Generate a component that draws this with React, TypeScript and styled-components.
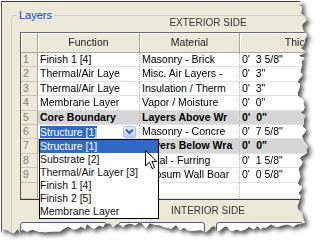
import React from 'react'
import styled, { createGlobalStyle } from 'styled-components'

const GlobalStyle = createGlobalStyle`
  html, body {
    margin: 0;
    padding: 0;
    background: #fff;
  }
  body {
    font-family: "Liberation Sans", Arial, sans-serif;
  }
`

// jagged outline of the torn screenshot, built once
function tornEdge(): string {
    let seed = 23
    const rnd = () => {
        seed = (seed * 16807) % 2147483647
        return seed / 2147483647 - 0.5
    }
    const pts: string[] = ['0px 0px', '298px 0px', '302px 2px']
    let y = 4
    while (y <= 218) {
        const x = 301 + Math.sin(y / 17) * 3 + rnd() * 7
        pts.push(`${x.toFixed(1)}px ${y}px`)
        y += 2 + Math.round((rnd() + 0.5) * 3)
    }
    let x = 304
    while (x >= 0) {
        const drop = x < 40 ? (40 - x) / 7 : 0
        const yy = 226 + Math.sin(x / 27) * 2.5 + drop + rnd() * 6
        pts.push(`${x}px ${yy.toFixed(1)}px`)
        x -= 2 + Math.round((rnd() + 0.5) * 3)
    }
    pts.push('0px 232px')
    return `polygon(${pts.join(',')})`
}
const TORN = tornEdge()

const COLS = '17px 102px 100px 138px 1fr'

const Sheet = styled.div`
    margin: 1px 0 0 1px;
    width: 312px;
    filter: drop-shadow(3px 3px 2px rgba(0, 0, 0, 0.65));
`

const Dialog = styled.div`
    width: 312px;
    height: 238px;
    box-sizing: border-box;
    overflow: hidden;
    background: #ece9d8;
    border-top: 1px solid #3c3c3c;
    border-left: 1px solid #5a5a5a;
    clip-path: ${TORN};
    font-size: 10.5px;
    color: #000;
`

const GroupBox = styled.div`
    position: relative;
    width: 394px;
    box-sizing: border-box;
    margin: 13px 0 0 9px;
    padding: 0 8px;
    border: 1px solid #d0d0bf;
    border-radius: 3px;
`

const Legend = styled.span`
    position: absolute;
    top: -8px;
    left: 5px;
    padding: 0 2px;
    background: #ece9d8;
    color: #0046d5;
    font-size: 11px;
    line-height: 14px;
`

const SideLabel = styled.div<{ $height: number; $pad: number }>`
    height: ${p => p.$height}px;
    box-sizing: border-box;
    padding-top: ${p => p.$pad}px;
    line-height: 14px;
    text-align: center;
    font-size: 10px;
    color: #333;
`

const Grid = styled.div`
    background: #fff;
    border-top: 1px solid #6b6b6b;
    border-left: 1px solid #5a5a5a;
    border-bottom: 1px solid #3a3a3a;
`

const HeaderRow = styled.div`
    display: grid;
    grid-template-columns: ${COLS};
    height: 20px;
    background: #ece9d8;
`

const HeadCell = styled.div`
    border-right: 1px solid #aca899;
    border-bottom: 1px solid #aca899;
    box-shadow: inset 1px 1px 0 #fff;
    text-align: center;
    line-height: 19px;
    color: #222;
    white-space: nowrap;
    overflow: hidden;
`

const Row = styled.div<{ $height?: number }>`
    display: grid;
    grid-template-columns: ${COLS};
    height: ${p => p.$height ?? 14.4}px;
`

const NumCell = styled.div`
    background: #ece9d8;
    border-right: 1px solid #aca899;
    border-bottom: 1px solid #c9c6b4;
    padding-left: 2px;
    line-height: 13px;
    color: #808080;
`

const Cell = styled.div<{ $core?: boolean }>`
    background: ${p => (p.$core ? '#d6d6d6' : '#fff')};
    font-weight: ${p => (p.$core ? 700 : 400)};
    border-right: 1px dotted #b8b8b8;
    border-bottom: 1px solid #e2e2e2;
    padding-left: 2px;
    line-height: 13px;
    white-space: pre;
    overflow: hidden;
`

const Rail = styled.div`
    background: #f3f1e8;
`

const ComboCell = styled(Cell)`
    position: relative;
    z-index: 2;
    overflow: visible;
    display: flex;
    align-items: center;
`

const Selected = styled.span`
    background: #316ac5;
    color: #fff;
    line-height: 12px;
`

const DropButton = styled.span`
    margin: 0 3px 0 auto;
    width: 13px;
    height: 12px;
    box-sizing: border-box;
    display: flex;
    align-items: center;
    justify-content: center;
    border: 1px solid #a9bff0;
    border-radius: 2px;
    background: linear-gradient(#e3ebfd, #b9cdf7);
`

const ListBox = styled.ul`
    position: absolute;
    top: calc(100% + 1px);
    left: 1px;
    width: 120px;
    box-sizing: border-box;
    margin: 0;
    padding: 0;
    list-style: none;
    background: #fff;
    border: 1px solid #000;
    font-weight: 400;
`

const Option = styled.li<{ $active?: boolean }>`
    height: 13px;
    line-height: 13px;
    white-space: nowrap;
    background: ${p => (p.$active ? '#316ac5' : 'transparent')};
    color: ${p => (p.$active ? '#fff' : '#111')};
`

const Pointer = styled.svg`
    position: absolute;
    left: 105px;
    top: 10px;
`

const ButtonRow = styled.div`
    display: flex;
    gap: 11px;
`

const Button = styled.button`
    width: 87px;
    height: 23px;
    padding: 0;
    border: 1px solid #4b5d7a;
    border-radius: 3px;
    background: linear-gradient(#ffffff, #f4f3ee 70%, #d6d0c5);
    font: inherit;
`

interface Layer {
    n: number
    fn: string
    mat: string
    thick: string
    core?: boolean
}

// function cells of rows 7-9 sit under the open list, so they stay blank
const layers: Layer[] = [
    { n: 1, fn: 'Finish 1 [4]', mat: 'Masonry - Brick', thick: `0'  3 5/8"` },
    { n: 2, fn: 'Thermal/Air Laye', mat: 'Misc. Air Layers -', thick: `0'  3"` },
    { n: 3, fn: 'Thermal/Air Laye', mat: 'Insulation / Therm', thick: `0'  3"` },
    { n: 4, fn: 'Membrane Layer', mat: 'Vapor / Moisture', thick: `0'  0"` },
    { n: 5, fn: 'Core Boundary', mat: 'Layers Above Wr', thick: `0'  0"`, core: true },
    { n: 6, fn: 'Structure [1]', mat: 'Masonry - Concre', thick: `0'  7 5/8"` },
    { n: 7, fn: '', mat: 'Layers Below Wra', thick: `0'  0"`, core: true },
    { n: 8, fn: '', mat: 'Metal - Furring', thick: `0'  1 5/8"` },
    { n: 9, fn: '', mat: 'Gypsum Wall Boar', thick: `0'  0 5/8"` },
]

const options = [
    'Structure [1]',
    'Substrate [2]',
    'Thermal/Air Layer [3]',
    'Finish 1 [4]',
    'Finish 2 [5]',
    'Membrane Layer',
]

function FunctionCombo({ value }: { value: string }) {
    return (
        <ComboCell>
            <Selected>{value}</Selected>
            <DropButton>
                <svg width="9" height="7" viewBox="0 0 9 7">
                    <path d="M1 1.5 L4.5 5 L8 1.5" fill="none" stroke="#4d6185" strokeWidth="2" />
                </svg>
            </DropButton>
            <ListBox>
                {options.map((o, i) => (
                    <Option key={o} $active={i === 0}>{o}</Option>
                ))}
                <Pointer width="13" height="20" viewBox="0 0 13 20">
                    <path
                        d="M0.5 0.5 L0.5 16 L4.4 12.3 L7.2 18.6 L9.6 17.5 L6.9 11.4 L11.8 11.4 Z"
                        fill="#fff"
                        stroke="#000"
                        strokeWidth="1"
                        strokeLinejoin="round"
                    />
                </Pointer>
            </ListBox>
        </ComboCell>
    )
}

export default function App() {
    return (
        <>
            <GlobalStyle />
            <Sheet>
                <Dialog>
                    <GroupBox>
                        <Legend>Layers</Legend>
                        <SideLabel $height={16} $pad={0}>EXTERIOR SIDE</SideLabel>
                        <Grid>
                            <HeaderRow>
                                <HeadCell />
                                <HeadCell>Function</HeadCell>
                                <HeadCell>Material</HeadCell>
                                <HeadCell>Thickness</HeadCell>
                                <HeadCell />
                            </HeaderRow>
                            {layers.map(l => (
                                <Row key={l.n}>
                                    <NumCell>{l.n}</NumCell>
                                    {l.n === 6 ? (
                                        <FunctionCombo value={l.fn} />
                                    ) : (
                                        <Cell $core={l.core}>{l.fn}</Cell>
                                    )}
                                    <Cell $core={l.core}>{l.mat}</Cell>
                                    <Cell $core={l.core}>{l.thick}</Cell>
                                    <Rail />
                                </Row>
                            ))}
                            <Row $height={16.4}>
                                <NumCell />
                                <Cell />
                                <Cell />
                                <Cell />
                                <Rail />
                            </Row>
                        </Grid>
                        <SideLabel $height={22} $pad={4}>INTERIOR SIDE</SideLabel>
                        <ButtonRow>
                            <Button aria-label="Insert" />
                            <Button aria-label="Delete" />
                            <Button aria-label="Up" />
                        </ButtonRow>
                    </GroupBox>
                </Dialog>
            </Sheet>
        </>
    )
}
